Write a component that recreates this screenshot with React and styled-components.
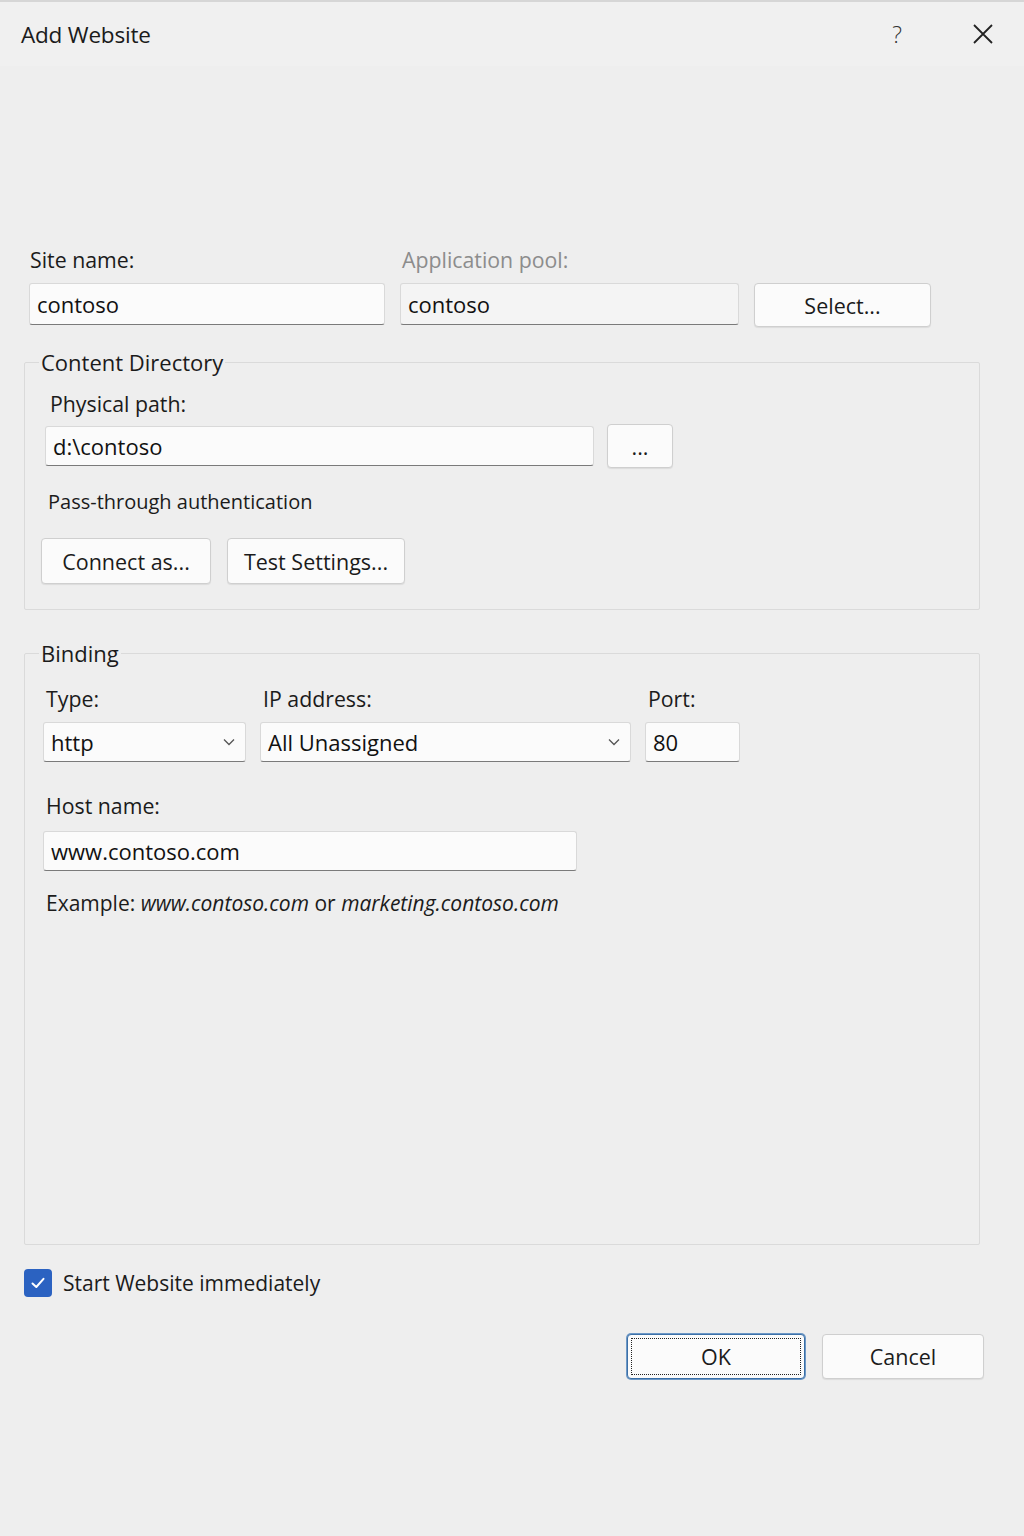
import React from "react";
import styled, { createGlobalStyle } from "styled-components";

const Global = createGlobalStyle`
  html, body { margin: 0; padding: 0; background: #eeeeee; }
  body { font-family: "Open Sans", "Noto Sans", sans-serif; color: #1b1b1b; }
  * { box-sizing: border-box; }
`;

const Dialog = styled.div`
  width: 1024px;
  min-height: 1536px;
  display: flex;
  flex-direction: column;
  background: #eeeeee;
  border-top: 2px solid #d6d6d6;
`;

const TitleBar = styled.div`
  height: 64px;
  display: flex;
  align-items: center;
  padding: 0 30px 0 21px;
  background: #f0f0f0;
`;

const Title = styled.div`
  flex: 1;
  font-size: 22.5px;
  font-weight: 400;
  letter-spacing: -0.2px;
  color: #1b1b1b;
`;

const HelpGlyph = styled.div`
  font-size: 23px;
  color: #333;
  margin-right: 70px;
  font-weight: 300;
`;

const CloseButton = styled.div`
  width: 22px;
  height: 22px;
  display: flex;
  align-items: center;
  justify-content: center;
`;

const Body = styled.div`
  padding: 180px 44px 0 24px;
  display: flex;
  flex-direction: column;
`;

const TopRow = styled.div`
  display: grid;
  grid-template-columns: 356px 339px 177px;
  column-gap: 15px;
  align-items: start;
  padding-left: 5px;
`;

const Field = styled.div`
  display: flex;
  flex-direction: column;
  gap: 9px;
`;

const Label = styled.div`
  font-size: 21.3px;
  line-height: 28px;
  color: ${(p) => (p.$muted ? "#8c8c8c" : "#1b1b1b")};
  padding-left: ${(p) => p.$indent || 0}px;
`;

const TextBox = styled.input`
  width: ${(p) => (p.$width ? `${p.$width}px` : "100%")};
  height: ${(p) => p.$height || 42}px;
  font-family: "Open Sans", "Noto Sans", sans-serif;
  font-size: 22px;
  color: #111;
  padding: 0 7px;
  background: ${(p) => (p.$dim ? "#f4f4f4" : "#fbfbfb")};
  border: 1px solid #d9d9d9;
  border-bottom: 1.5px solid #7a7a7a;
  border-radius: 3px;
  outline: none;
`;

const Button = styled.button`
  position: relative;
  width: ${(p) => p.$width}px;
  height: ${(p) => p.$height || 44}px;
  font-family: "Open Sans", "Noto Sans", sans-serif;
  font-size: 21.5px;
  color: #1b1b1b;
  background: #fbfbfb;
  border: 1px solid ${(p) => (p.$default ? "#3b6fa6" : "#cfcfcf")};
  border-radius: 4px;
  box-shadow: ${(p) => (p.$default ? "0 0 0 1px #6d98c6" : "0 1px 1px rgba(0,0,0,0.08)")};
  padding: 0;
  cursor: default;
  &::after {
    content: "";
    display: ${(p) => (p.$default ? "block" : "none")};
    position: absolute;
    inset: 3px;
    border: 1.5px dotted #222;
    border-radius: 1px;
  }
`;

const Group = styled.fieldset`
  margin: ${(p) => p.$top || 0}px 0 0 0;
  padding: 0 0 ${(p) => p.$bottom || 0}px 16px;
  border: 1px solid #dadada;
  border-radius: 2px;
  min-height: ${(p) => p.$minHeight || 0}px;
`;

const Legend = styled.legend`
  font-size: 22px;
  line-height: 28px;
  padding: 0 2px;
  margin-left: -2px;
  color: #1b1b1b;
`;

const GroupContent = styled.div`
  display: flex;
  flex-direction: column;
  padding-top: ${(p) => p.$top || 0}px;
`;

const PathRow = styled.div`
  display: flex;
  align-items: center;
  gap: 13px;
  margin-top: 6px;
  padding-left: 4px;
`;

const SmallText = styled.div`
  font-size: ${(p) => p.$size || 20}px;
  line-height: 28px;
  color: #1b1b1b;
  padding-left: ${(p) => p.$indent || 0}px;
  margin-top: ${(p) => p.$top || 0}px;
  em { font-style: italic; }
`;

const ButtonRow = styled.div`
  display: flex;
  gap: 16px;
  margin-top: ${(p) => p.$top || 0}px;
`;

const BindingGrid = styled.div`
  display: grid;
  grid-template-columns: 203px 371px 95px;
  column-gap: 14px;
  row-gap: 9px;
  padding-left: 2px;
`;

const Combo = styled.div`
  height: 40px;
  display: flex;
  align-items: center;
  justify-content: space-between;
  padding: 0 10px 0 7px;
  font-size: 22px;
  color: #111;
  background: #fbfbfb;
  border: 1px solid #d9d9d9;
  border-bottom: 1.5px solid #7a7a7a;
  border-radius: 3px;
`;

const HostBlock = styled.div`
  display: flex;
  flex-direction: column;
  gap: 11px;
  margin-top: 30px;
  padding-left: 2px;
`;

const CheckRow = styled.div`
  display: flex;
  align-items: center;
  gap: 11px;
  margin-top: 24px;
  padding-left: 0;
  font-size: 21px;
`;

const CheckBox = styled.span`
  width: 28px;
  height: 28px;
  border-radius: 4px;
  background: #2b62c1;
  display: flex;
  align-items: center;
  justify-content: center;
`;

const Footer = styled.div`
  display: flex;
  justify-content: flex-end;
  gap: 17px;
  margin-top: 37px;
  margin-right: -4px;
`;

const Chevron = () => (
  <svg width="12" height="8" viewBox="0 0 12 8">
    <path d="M1 1.5 L6 6.5 L11 1.5" fill="none" stroke="#555" strokeWidth="1.3" />
  </svg>
);

export default function App() {
  return (
    <>
      <Global />
      <Dialog>
        <TitleBar>
          <Title>Add Website</Title>
          <HelpGlyph>?</HelpGlyph>
          <CloseButton>
            <svg width="22" height="22" viewBox="0 0 22 22">
              <path d="M2 2 L20 20 M20 2 L2 20" stroke="#222" strokeWidth="1.8" />
            </svg>
          </CloseButton>
        </TitleBar>
        <Body>
          <TopRow>
            <Field>
              <Label $indent={1}>Site name:</Label>
              <TextBox readOnly value="contoso" />
            </Field>
            <Field>
              <Label $muted $indent={2}>Application pool:</Label>
              <TextBox readOnly value="contoso" $dim />
            </Field>
            <Field>
              <Label>&nbsp;</Label>
              <Button $width={177} $height={44}>Select...</Button>
            </Field>
          </TopRow>

          <Group $top={21} $bottom={25}>
            <Legend>Content Directory</Legend>
            <GroupContent $top={14}>
              <Label $indent={9}>Physical path:</Label>
              <PathRow>
                <TextBox readOnly value="d:\contoso" $width={549} $height={40} />
                <Button $width={66} $height={44}>...</Button>
              </PathRow>
              <SmallText $indent={7} $top={20}>Pass-through authentication</SmallText>
              <ButtonRow $top={22}>
                <Button $width={170} $height={46}>Connect as...</Button>
                <Button $width={178} $height={46}>Test Settings...</Button>
              </ButtonRow>
            </GroupContent>
          </Group>

          <Group $top={29} $minHeight={606}>
            <Legend>Binding</Legend>
            <GroupContent $top={18}>
              <BindingGrid>
                <Label $indent={3}>Type:</Label>
                <Label $indent={3}>IP address:</Label>
                <Label $indent={3}>Port:</Label>
                <Combo>http<Chevron /></Combo>
                <Combo>All Unassigned<Chevron /></Combo>
                <TextBox readOnly value="80" $height={40} />
              </BindingGrid>
              <HostBlock>
                <Label $indent={3}>Host name:</Label>
                <TextBox readOnly value="www.contoso.com" $width={534} $height={40} />
                <SmallText $indent={3} $top={7} $size={21}>
                  Example: <em>www.contoso.com</em> or <em>marketing.contoso.com</em>
                </SmallText>
              </HostBlock>
            </GroupContent>
          </Group>

          <CheckRow>
            <CheckBox>
              <svg width="18" height="18" viewBox="0 0 18 18">
                <path d="M3.5 9.5 L7.3 13 L14.5 4.8" fill="none" stroke="#fff" strokeWidth="2" strokeLinecap="round" strokeLinejoin="round" />
              </svg>
            </CheckBox>
            Start Website immediately
          </CheckRow>

          <Footer>
            <Button $width={178} $height={45} $default>OK</Button>
            <Button $width={162} $height={45}>Cancel</Button>
          </Footer>
        </Body>
      </Dialog>
    </>
  );
}
